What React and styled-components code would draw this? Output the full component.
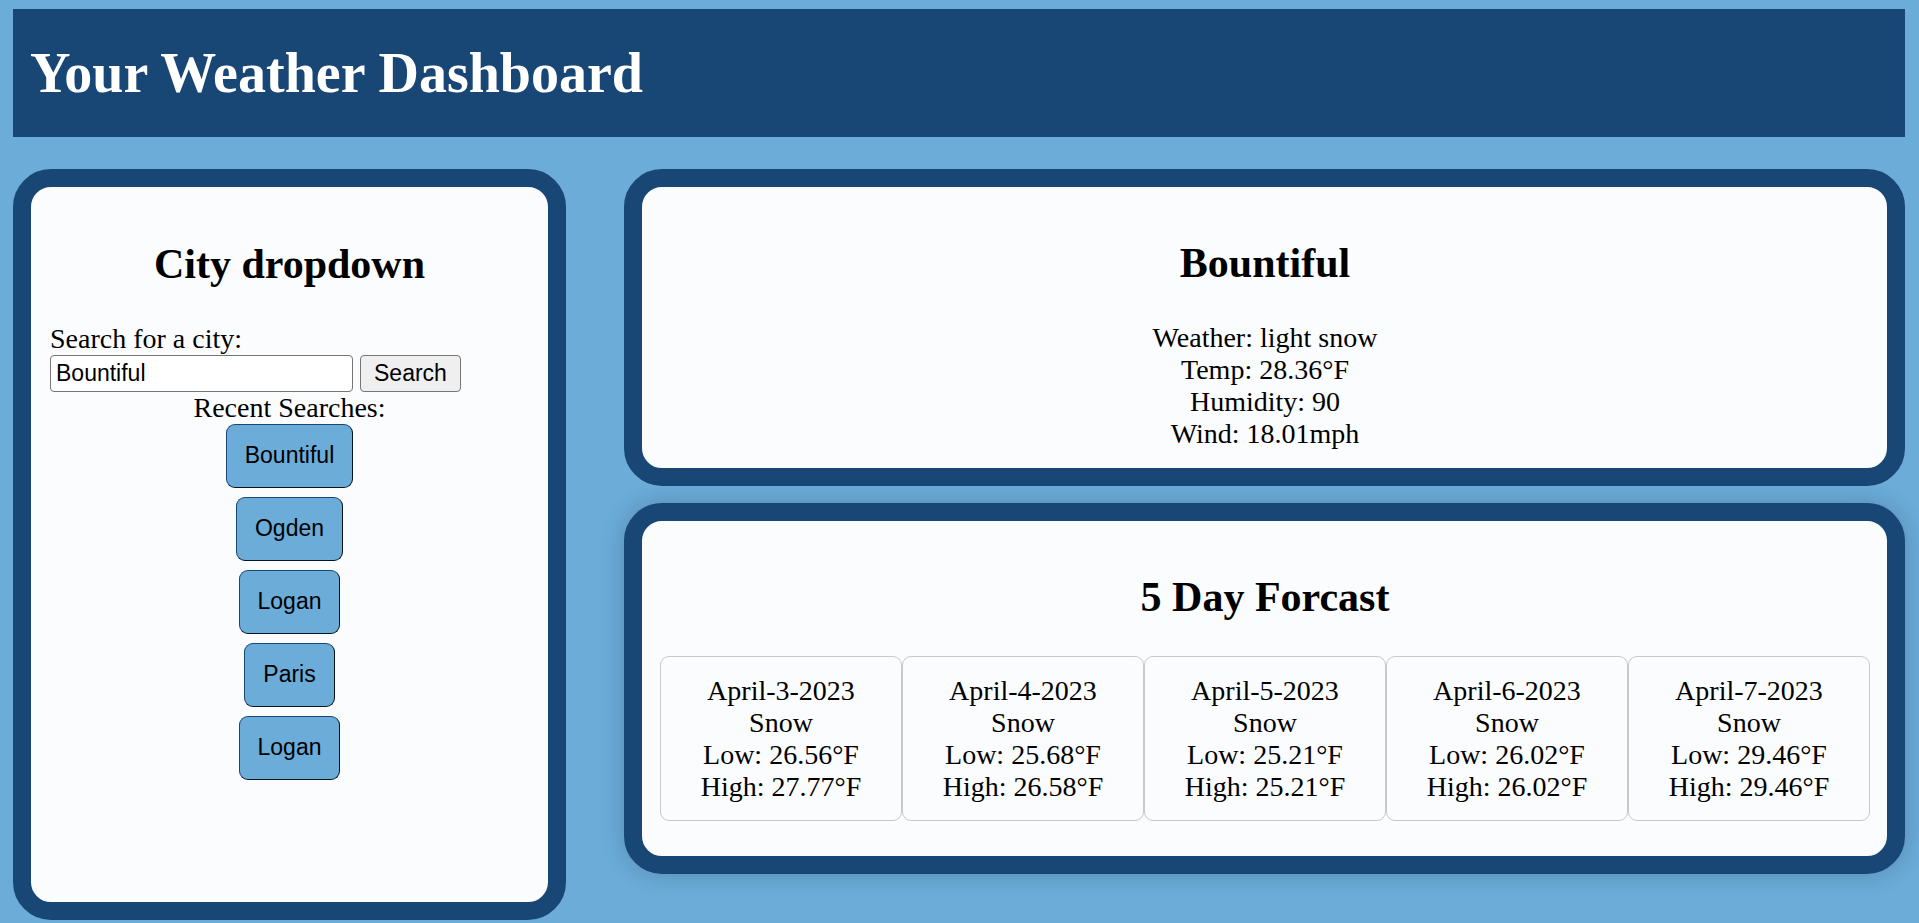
import React, { useState } from "react";
import styled, { createGlobalStyle, css } from "styled-components";

const colors = {
  sky: "#6bacd9",
  navy: "#184675",
  paper: "#fbfcfe",
};

const GlobalStyle = createGlobalStyle`
  *, *::before, *::after { box-sizing: border-box; }
  body {
    margin: 0;
    background: ${colors.sky};
    color: #000;
    font: 28px/32px "Liberation Serif", "Times New Roman", serif;
  }
`;

const Page = styled.div`
  padding: 9px 14px 3px 13px;
`;

const Header = styled.header`
  padding: 32px 17px;
  background: ${colors.navy};
  color: #fff;
`;

const PageTitle = styled.h1`
  margin: 0;
  font-size: 56px;
  line-height: 64px;
`;

const Layout = styled.main`
  display: flex;
  align-items: flex-start;
  gap: 58px;
  margin-top: 32px;
`;

const Panel = styled.section`
  padding: 18px 17px 18px 18px;
  border: 18px solid ${colors.navy};
  border-radius: 38px;
  background: ${colors.paper};
  ${(p) => p.$raised && css`box-shadow: 0 0 24px rgba(0, 0, 0, 0.2);`}
`;

const SearchPanel = styled(Panel)`
  flex: 0 0 553px;
  min-height: calc(100vh - 172px);
  padding: 18px 19px;
`;

const Results = styled.div`
  flex: 1;
  min-width: 0;
  display: flex;
  flex-direction: column;
  gap: 17px;
  text-align: center;
`;

const PanelTitle = styled.h2`
  margin: ${(p) => (p.$compact ? "34px" : "35px")} 0 35px;
  font-size: 42px;
  line-height: 48px;
  text-align: center;
`;

const SearchLabel = styled.label`
  display: block;
`;

const SearchRow = styled.div`
  display: flex;
  gap: 7px;
`;

const controlFont = css`
  font-family: "Liberation Sans", Arial, sans-serif;
  font-size: 23px;
  line-height: 27px;
  color: #000;
`;

const CityInput = styled.input`
  ${controlFont}
  width: 303px;
  height: 37px;
  padding: 2px 5px;
  border: 1px solid #767676;
  border-radius: 4px;
  background: #fff;
`;

const SearchButton = styled.button`
  ${controlFont}
  height: 37px;
  padding: 2px 13px;
  border: 1px solid #767676;
  border-radius: 4px;
  background: #efefef;
`;

const RecentSearches = styled.div`
  display: flex;
  flex-direction: column;
  align-items: center;
`;

const CityButton = styled.button`
  ${controlFont}
  height: 64px;
  margin-bottom: 9px;
  padding: 0 18px 2px;
  border: 1px solid;
  border-color: ${colors.navy} #061320 #061320 ${colors.navy};
  border-radius: 9px;
  background: ${colors.sky};
`;

const ForecastRow = styled.div`
  display: grid;
  grid-template-columns: repeat(5, 1fr);
  margin-bottom: 17px;
`;

const DayCard = styled.article`
  padding: 18px 0 17px;
  border: 1px solid #c8c9cb;
  border-radius: 9px;
`;

const recentCities = ["Bountiful", "Ogden", "Logan", "Paris", "Logan"];

const conditions = [
  "Weather: light snow",
  "Temp: 28.36°F",
  "Humidity: 90",
  "Wind: 18.01mph",
];

const forecast = [
  { date: "April-3-2023", low: "26.56", high: "27.77" },
  { date: "April-4-2023", low: "25.68", high: "26.58" },
  { date: "April-5-2023", low: "25.21", high: "25.21" },
  { date: "April-6-2023", low: "26.02", high: "26.02" },
  { date: "April-7-2023", low: "29.46", high: "29.46" },
];

export default function App() {
  const [city, setCity] = useState("Bountiful");

  return (
    <Page>
      <GlobalStyle />
      <Header>
        <PageTitle>Your Weather Dashboard</PageTitle>
      </Header>
      <Layout>
        <SearchPanel>
          <PanelTitle>City dropdown</PanelTitle>
          <form onSubmit={(e) => e.preventDefault()}>
            <SearchLabel htmlFor="city">Search for a city:</SearchLabel>
            <SearchRow>
              <CityInput
                id="city"
                type="text"
                value={city}
                onChange={(e) => setCity(e.target.value)}
              />
              <SearchButton type="submit">Search</SearchButton>
            </SearchRow>
          </form>
          <RecentSearches>
            <span>Recent Searches:</span>
            {recentCities.map((name, i) => (
              <CityButton key={i} type="button" onClick={() => setCity(name)}>
                {name}
              </CityButton>
            ))}
          </RecentSearches>
        </SearchPanel>
        <Results>
          <Panel>
            <PanelTitle $compact>Bountiful</PanelTitle>
            {conditions.map((line) => (
              <div key={line}>{line}</div>
            ))}
          </Panel>
          <Panel $raised>
            <PanelTitle $compact>5 Day Forcast</PanelTitle>
            <ForecastRow>
              {forecast.map((day) => (
                <DayCard key={day.date}>
                  <div>{day.date}</div>
                  <div>Snow</div>
                  <div>Low: {day.low}°F</div>
                  <div>High: {day.high}°F</div>
                </DayCard>
              ))}
            </ForecastRow>
          </Panel>
        </Results>
      </Layout>
    </Page>
  );
}
